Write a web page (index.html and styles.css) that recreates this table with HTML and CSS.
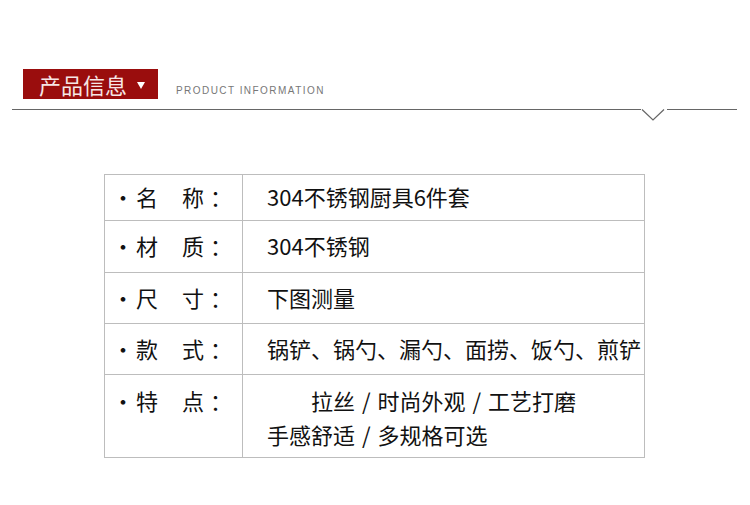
FILE: index.html
```html
<!DOCTYPE html>
<html lang="zh-CN">
<head>
<meta charset="utf-8">
<link rel="stylesheet" href="styles.css">
</head>
<body>
<div class="page">
  <div class="head">
    <div class="tag">产品信息<span class="tri"></span></div>
    <div class="en">PRODUCT INFORMATION</div>
  </div>
  <div class="rule">
    <svg class="notch" width="26" height="12" viewBox="0 0 26 12">
      <rect x="0" y="0" width="26" height="2" fill="#fff"/>
      <polyline points="1,0.5 12,11 23,0.5" fill="none" stroke="#666" stroke-width="1.2"/>
    </svg>
  </div>
  <table class="spec">
    <tr class="r1"><td class="lab"><span class="dot">·</span><span class="c1">名</span><span class="c2">称</span><span class="col">：</span></td><td class="val">304不锈钢厨具6件套</td></tr>
    <tr class="r2"><td class="lab"><span class="dot">·</span><span class="c1">材</span><span class="c2">质</span><span class="col">：</span></td><td class="val">304不锈钢</td></tr>
    <tr class="r3"><td class="lab"><span class="dot">·</span><span class="c1">尺</span><span class="c2">寸</span><span class="col">：</span></td><td class="val">下图测量</td></tr>
    <tr class="r4"><td class="lab"><span class="dot">·</span><span class="c1">款</span><span class="c2">式</span><span class="col">：</span></td><td class="val">锅铲、锅勺、漏勺、面捞、饭勺、煎铲</td></tr>
    <tr class="r5"><td class="lab top"><span class="dot">·</span><span class="c1">特</span><span class="c2">点</span><span class="col">：</span></td><td class="val top"><div class="ln ind">拉丝 / 时尚外观 / 工艺打磨</div><div class="ln">手感舒适 / 多规格可选</div></td></tr>
  </table>
</div>
</body>
</html>
```
FILE: styles.css
```css
html, body {
  margin: 0;
  padding: 0;
  background: #fff;
}
.page {
  width: 750px;
  height: 505px;
  font-family: "Noto Sans CJK SC", "Noto Sans", sans-serif;
  color: #111;
}
.head {
  display: flex;
  align-items: flex-end;
  padding: 69px 0 0 23px;
  height: 30px;
}
.tag {
  width: 135px;
  height: 30px;
  box-sizing: border-box;
  background: #9a0d0d;
  color: #f6e6e6;
  font-size: 22px;
  line-height: 30px;
  padding-left: 16px;
  display: flex;
  align-items: center;
}
.tri {
  width: 0;
  height: 0;
  border-left: 4px solid transparent;
  border-right: 4px solid transparent;
  border-top: 7px solid #fff;
  margin-left: 10px;
  margin-top: 2px;
}
.en {
  font-family: "Liberation Sans", Arial, sans-serif;
  font-size: 10px;
  letter-spacing: 1.45px;
  color: #777;
  margin-left: 18px;
  line-height: 12px;
  padding-bottom: 2px;
}
.rule {
  position: relative;
  margin: 10px 0 0 12px;
  width: 725px;
  height: 0;
  border-top: 1px solid #666;
}
.notch {
  position: absolute;
  left: 629px;
  top: -1px;
  display: block;
}
.spec {
  border-collapse: collapse;
  margin: 64px 0 0 104px;
  width: 541px;
}
.spec td {
  border: 1px solid #bdbdbd;
  padding: 0 0 3px 0;
  vertical-align: middle;
  font-size: 22px;
  line-height: 30px;
}
.r1 td { height: 42px; }
.r2 td { height: 48px; }
.r3 td { height: 47px; }
.r4 td { height: 47px; }
.lab {
  width: 137px;
  white-space: nowrap;
}
.lab span {
  display: inline-block;
}
.dot {
  width: 12px;
  margin-left: 7px;
  text-align: center;
}
.c1 { margin-left: 12px; }
.c2 { margin-left: 24px; }
.col { margin-left: 6px; }
.spec td.val {
  padding-left: 24px;
  white-space: nowrap;
  word-spacing: 2px;
}
.spec td.top {
  vertical-align: top;
  padding-top: 8px;
  padding-bottom: 6px;
  line-height: 34px;
}
.ln {
  line-height: 34px;
}
.ind {
  padding-left: 44px;
}
```
